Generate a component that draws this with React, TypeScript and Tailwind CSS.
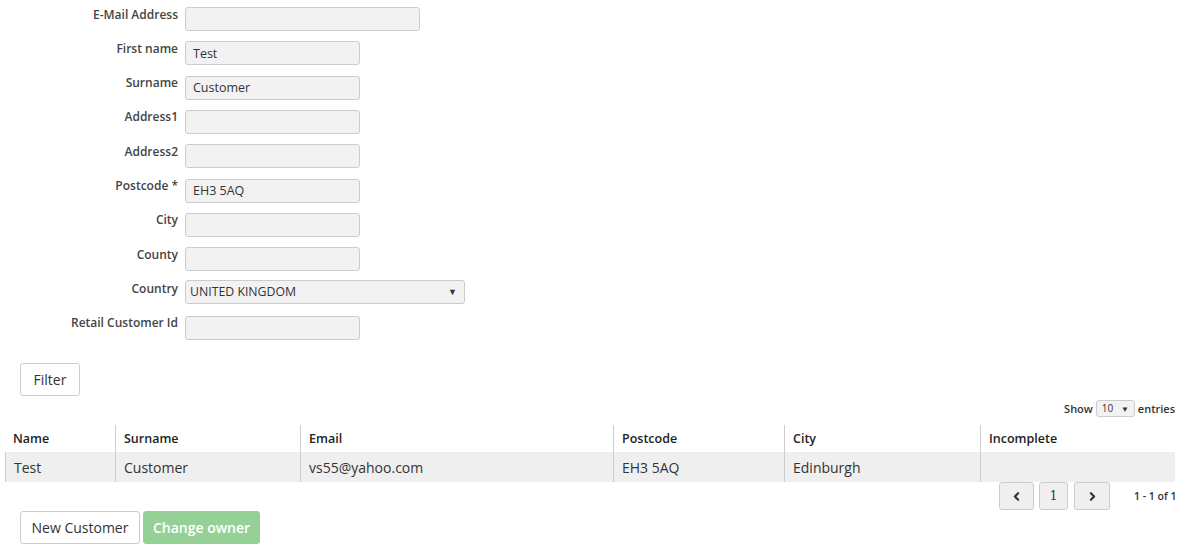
import { ChevronLeft, ChevronRight } from 'lucide-react';

const fields = [
  { label: 'E-Mail Address', value: '', w: 'w-[235px]' },
  { label: 'First name', value: 'Test', w: 'w-[175px]' },
  { label: 'Surname', value: 'Customer', w: 'w-[175px]' },
  { label: 'Address1', value: '', w: 'w-[175px]' },
  { label: 'Address2', value: '', w: 'w-[175px]' },
  { label: 'Postcode *', value: 'EH3 5AQ', w: 'w-[175px]' },
  { label: 'City', value: '', w: 'w-[175px]' },
  { label: 'County', value: '', w: 'w-[175px]' },
];

const columns = [
  { name: 'Name', w: 'w-[110px]' },
  { name: 'Surname', w: 'w-[185px]' },
  { name: 'Email', w: 'w-[313px]' },
  { name: 'Postcode', w: 'w-[171px]' },
  { name: 'City', w: 'w-[196px]' },
  { name: 'Incomplete', w: 'flex-1' },
];

const row = ['Test', 'Customer', 'vs55@yahoo.com', 'EH3 5AQ', 'Edinburgh', ''];

const FormRow = ({ label, children }: { label: string; children: React.ReactNode }) => (
  <div className="flex items-start h-6">
    <label className="w-[178px] text-right text-[12px] font-semibold text-[#444] leading-[18px]">{label}</label>
    <div className="ml-[7px]">{children}</div>
  </div>
);

const App = () => {
  return (
    <div className="w-[1183px] h-[550px] bg-white text-[#333] font-['Open_Sans',sans-serif] overflow-hidden">
      <div className="pt-[5.5px] flex flex-col gap-[10.33px]">
        {fields.map((f) => (
          <FormRow key={f.label} label={f.label}>
            <input
              readOnly
              value={f.value}
              className={`${f.w} h-6 bg-[#f2f2f2] border border-[#ccc] rounded-[3px] px-[7px] text-[12.5px] text-[#333] outline-none`}
            />
          </FormRow>
        ))}
        <FormRow label="Country">
          <div className="w-[280px] h-6 bg-[#f2f2f2] border border-[#ccc] rounded-[3px] pl-[4px] pr-[7px] flex items-center justify-between text-[12.3px] text-[#333]">
            <span>UNITED KINGDOM</span>
            <span className="text-[9px]">▼</span>
          </div>
        </FormRow>
        <FormRow label="Retail Customer Id">
          <input
            readOnly
            value=""
            className="w-[175px] h-6 bg-[#f2f2f2] border border-[#ccc] rounded-[3px] px-[7px] text-[12.5px] outline-none"
          />
        </FormRow>
      </div>

      <div className="pl-5 mt-[25px]">
        <button className="w-[60px] h-[33px] border border-[#ccc] rounded-[3px] bg-white text-[14px] text-[#333]">Filter</button>
      </div>

      <div className="flex justify-end items-center pr-2 mt-[4px] h-[17px] text-[11px] font-semibold text-[#333]">
        <span>Show</span>
        <div className="mx-[3px] w-[39px] h-[17px] border border-[#ccc] rounded-[3px] bg-[#f2f2f2] flex items-center justify-between px-[5px] font-normal text-[10px]">
          <span>10</span>
          <span className="text-[8px]">▼</span>
        </div>
        <span>entries</span>
      </div>

      <div className="ml-[5px] w-[1170px] mt-[8px]">
        <div className="flex h-[27px]">
          {columns.map((c, i) => (
            <div
              key={c.name}
              className={`${c.w} ${i > 0 ? 'border-l border-[#ccc]' : ''} px-2 flex items-center text-[12.5px] font-semibold text-[#222]`}
            >
              {c.name}
            </div>
          ))}
        </div>
        <div className="flex h-[30px] bg-[#efefef] border-l border-[#ccc]">
          {columns.map((c, i) => (
            <div
              key={c.name}
              className={`${i === 0 ? 'w-[109px]' : c.w} ${i > 0 ? 'border-l border-[#ccc]' : ''} px-2 flex items-center text-[14px] text-[#333]`}
            >
              {row[i]}
            </div>
          ))}
        </div>
      </div>

      <div className="flex justify-end items-center pr-2 h-[28px]">
        <button className="w-[35px] h-[28px] border border-[#ccc] rounded-[3px] bg-[#efefef] flex items-center justify-center">
          <ChevronLeft size={13} strokeWidth={4} color="#333" />
        </button>
        <button className="ml-[5px] w-[29px] h-[28px] border border-[#ccc] rounded-[3px] bg-[#efefef] text-[12px] font-['DejaVu_Serif',serif] text-[#333]">1</button>
        <button className="ml-[6px] w-[36px] h-[28px] border border-[#ccc] rounded-[3px] bg-[#efefef] flex items-center justify-center">
          <ChevronRight size={13} strokeWidth={4} color="#333" />
        </button>
        <span className="ml-[24px] w-[41px] text-right text-[10.5px] font-semibold text-[#333] whitespace-nowrap">1 - 1 of 1</span>
      </div>

      <div className="pl-5 mt-[1px] flex gap-[3px]">
        <button className="w-[120px] h-[33px] border border-[#ccc] rounded-[3px] bg-white text-[14px] text-[#333]">New Customer</button>
        <button className="w-[117px] h-[33px] border border-[#95d196] rounded-[3px] bg-[#95d196] text-[14px] font-semibold text-white">Change owner</button>
      </div>
    </div>
  );
};

export default App;
